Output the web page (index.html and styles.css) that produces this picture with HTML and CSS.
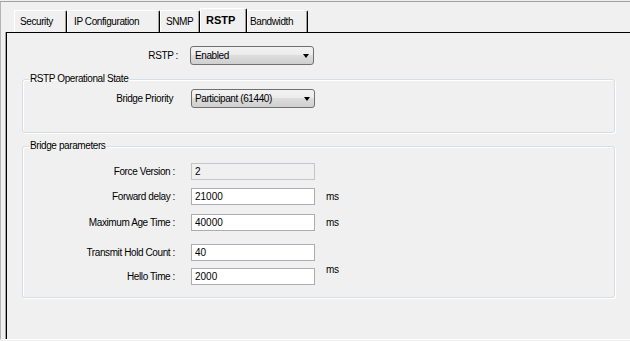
FILE: index.html
```html
<!DOCTYPE html>
<html lang="en">
<head>
  <meta charset="UTF-8">
  <title>RSTP Settings</title>
  <link rel="stylesheet" href="styles.css">
</head>
<body>
  <div class="window">
    <!-- Tab strip -->
    <div class="tabs">
      <div class="tab tab-security">Security</div>
      <div class="tab tab-ip">IP Configuration</div>
      <div class="tab tab-snmp">SNMP</div>
      <div class="tab tab-rstp active">RSTP</div>
      <div class="tab tab-bandwidth">Bandwidth</div>
    </div>

    <!-- Tab page -->
    <div class="panel">
      <div class="top-row">
        <label class="label">RSTP :</label>
        <div class="combo">Enabled<span class="arrow"></span></div>
      </div>

      <fieldset class="group group-state">
        <legend>RSTP Operational State</legend>
        <div class="state-row">
          <label class="label">Bridge Priority</label>
          <div class="combo">Participant (61440)<span class="arrow"></span></div>
        </div>
      </fieldset>

      <fieldset class="group group-params">
        <legend>Bridge parameters</legend>
        <div class="field">
          <label class="label">Force Version :</label>
          <input class="text" type="text" value="2" disabled>
        </div>
        <div class="field">
          <label class="label">Forward delay :</label>
          <input class="text" type="text" value="21000">
          <span class="unit">ms</span>
        </div>
        <div class="field field-wide">
          <label class="label">Maximum Age Time :</label>
          <input class="text" type="text" value="40000">
          <span class="unit">ms</span>
        </div>
        <div class="field field-loose">
          <label class="label">Transmit Hold Count :</label>
          <input class="text" type="text" value="40">
        </div>
        <div class="field field-tight">
          <label class="label">Hello Time :</label>
          <input class="text" type="text" value="2000">
          <span class="unit unit-raised">ms</span>
        </div>
      </fieldset>
    </div>
  </div>
</body>
</html>
```

FILE: styles.css
```css
/* General */
body {
  margin: 0;
  background: #f0f0f0;
  font-family: "Liberation Sans", Arial, sans-serif;
  font-size: 10px;
  letter-spacing: -0.4px;
  color: #000;
}

.window {
  margin-top: 1px;
  border-top: 1px solid #a0a0a0;
  border-left: 1px solid #b4b4b4;
  border-bottom: 1px solid #fff;
}

/* Tabs */
.tabs {
  display: flex;
  align-items: flex-end;
  height: 30px;
  padding-left: 13px;
}

.tab {
  box-sizing: border-box;
  height: 22px;
  display: flex;
  align-items: center;
  padding-left: 5px;
  border-left: 1px solid #fff;
  border-top: 1px solid #fff;
  border-right: 1px solid #000;
  border-top-right-radius: 2px;
  box-shadow: inset -1px 0 0 #a0a0a0;
}

.tab-security { width: 53px; }
.tab-ip { width: 93px; padding-left: 6px; }
.tab-snmp { width: 40px; }
.tab-rstp { width: 47px; }
.tab-bandwidth { width: 61px; padding-left: 2px; }

.tab.active {
  height: 24px;
  font-size: 11px;
  font-weight: bold;
  letter-spacing: 0;
  padding-bottom: 2px;
}

/* Page */
.panel {
  box-sizing: border-box;
  height: 307px;
  margin-left: 5px;
  border-top: 1px solid #000;
  border-left: 1px solid #000;
  box-shadow: -1px 0 0 #a0a0a0;
}

.label {
  text-align: right;
}

.top-row {
  display: grid;
  grid-template-columns: 171px 124px;
  column-gap: 12px;
  align-items: center;
  margin-top: 13px;
}

/* Combo box */
.combo {
  box-sizing: border-box;
  height: 19px;
  display: flex;
  align-items: center;
  justify-content: space-between;
  padding: 0 4px 0 4px;
  border: 1px solid #707070;
  border-radius: 3px;
  background: linear-gradient(#f2f2f2 0%, #ebebeb 50%, #dddddd 50%, #cfcfcf 100%);
}

.arrow {
  width: 0;
  height: 0;
  border-style: solid;
  border-width: 4px 3.5px 0 3.5px;
  border-color: #000 transparent transparent transparent;
  margin-top: 1px;
}

/* Group boxes */
.group {
  margin: 8px 15px 0 15px;
  padding: 0;
  border: 1px solid #d5dfe5;
  border-radius: 3px;
  box-shadow: inset 1px 1px 0 #fff, 1px 1px 0 #fff;
}

.group legend {
  margin-left: 6px;
  padding: 0 1px;
  line-height: 12px;
}

.group-params {
  margin-top: 7px;
  padding-top: 11px;
  padding-bottom: 12px;
}

.state-row {
  display: grid;
  grid-template-columns: 150px 124px;
  column-gap: 18px;
  align-items: center;
  padding: 4px 0 24px 0;
}

.state-row .combo {
  padding-left: 3px;
}

/* Parameter rows */
.field {
  display: grid;
  grid-template-columns: 152px 124px auto;
  column-gap: 16px;
  align-items: center;
  justify-items: start;
}

.field .label {
  justify-self: end;
}

.field + .field { margin-top: 8px; }
.field-wide { margin-top: 9px !important; }
.field-loose { margin-top: 13px !important; }
.field-tight { margin-top: 7px !important; }

.text {
  box-sizing: border-box;
  width: 124px;
  height: 17px;
  margin: 0;
  padding: 0 3px;
  border: 1px solid #abadb3;
  background: #fff;
  font: inherit;
  color: #000;
  outline: none;
}

.text:disabled {
  background: #f0f0f0;
  border-color: #c3c6cb;
  color: #000;
}

.unit {
  margin-left: -5px;
}

.unit-raised {
  align-self: start;
  margin-top: -4px;
}
```
